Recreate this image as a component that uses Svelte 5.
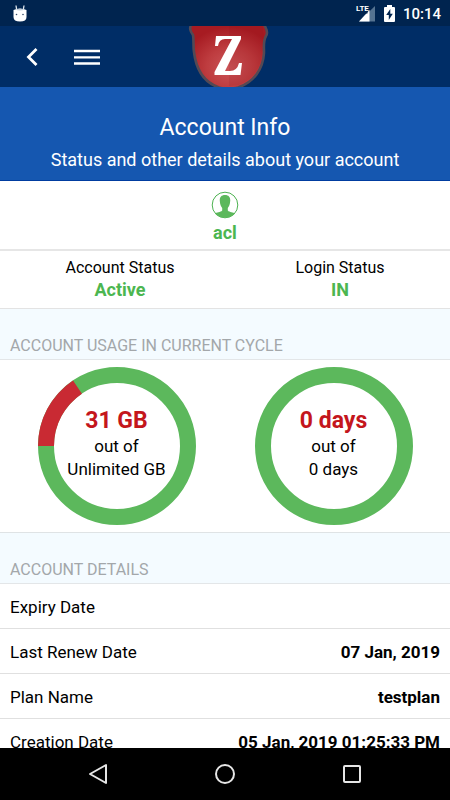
<script>
  const statuses = [
    { label: 'Account Status', value: 'Active' },
    { label: 'Login Status', value: 'IN' },
  ];

  const usage = [
    { used: '31 GB', total: 'Unlimited GB', share: 15.6 },
    { used: '0 days', total: '0 days', share: 0 },
  ];

  const details = [
    { label: 'Expiry Date', value: '' },
    { label: 'Last Renew Date', value: '07 Jan, 2019' },
    { label: 'Plan Name', value: 'testplan' },
    { label: 'Creation Date', value: '05 Jan, 2019 01:25:33 PM' },
  ];
</script>

<div class="screen">
  <div class="status-bar">
    <svg width="14" height="17" viewBox="0 0 14 17" aria-hidden="true">
      <path d="M3 .5 3.700 5M11 .5 10.300 5" stroke="#dfe6ee" stroke-width="1.300" />
      <path d="M.5 5Q7 2 13.500 5V12Q13.500 16.500 7 16.500T.5 12Z" fill="#fff" />
      <path d="M2 4.500Q7 2.800 12 4.500Q7 6.500 2 4.500Z" fill="#c2cedb" />
      <circle cx="3.500" cy="9.500" r=".8" fill="#354b69" />
      <circle cx="10" cy="9.500" r=".8" fill="#354b69" />
    </svg>
    <div class="indicators">
      <span class="signal">
        <svg width="20" height="17" viewBox="0 0 20 17" aria-hidden="true">
          <path d="M19 1V16.500H3Z" fill="#557391" />
          <path d="M13.500 5V16.500H3Z" fill="#fff" />
          <path d="M0 0H11.500V8.500H0Z" fill="#00244f" />
        </svg>
        <span class="lte">LTE</span>
      </span>
      <svg class="battery" width="11" height="17" viewBox="0 0 11 17" aria-hidden="true">
        <path d="M3 0H8V2H10Q11 2 11 3V16Q11 17 10 17H1Q0 17 0 16V3Q0 2 1 2H3Z" fill="#fff" />
        <path d="M6.300 4 2.200 10H4.800V15L8.800 8.700H6.300Z" fill="#00244f" />
      </svg>
      <span class="clock">10:14</span>
    </div>
  </div>

  <header>
    <div class="tools">
      <button aria-label="Back">
        <svg width="12" height="18" viewBox="0 0 12 18"><path d="M10.500 1 2.500 9l8 8" fill="none" stroke="#fff" stroke-width="2.800" /></svg>
      </button>
      <button aria-label="Menu">
        <svg width="26" height="16" viewBox="0 0 26 16"><path d="M0 2H26M0 8.300H26M0 14.500H26" stroke="#fff" stroke-width="2.300" /></svg>
      </button>
    </div>
    <svg class="logo" width="82" height="61" viewBox="0 0 82 61" role="img" aria-label="Z">
      <defs>
        <radialGradient id="shield" cx=".52" cy=".68" r=".62">
          <stop offset="0" stop-color="#cb5558" />
          <stop offset=".5" stop-color="#be3c3f" />
          <stop offset="1" stop-color="#a71b22" />
        </radialGradient>
      </defs>
      <path d="M4 -3C1 2 2 5 5 9C6 14 5 20 6 26C8 43 15 56 31 61.500Q40 64 50 61.500C66 56 75 43 76 27C76 20 75 15 78 10Q81 6 75 -3Z" fill="url(#shield)" stroke="#534a55" stroke-width="2.600" />
      <path d="M41 0H75V6L76 10Q74 15 74 27C73 42 65 54 50 59L41 60Z" fill="#8d101b" opacity=".12" />
      <path d="M28 10H53V13L37 45H42Q49 45 51 37H54L52.500 49H26.500V46L44 13H37Q31 13 30 20H27Z" fill="#fff" />
    </svg>
  </header>

  <main>
    <section class="banner">
      <h1>Account Info</h1>
      <p>Status and other details about your account</p>
    </section>

    <section class="user">
      <svg width="28" height="28" viewBox="0 0 28 28" aria-hidden="true">
        <circle cx="14" cy="14" r="12.800" fill="#fff" stroke="#4db251" />
        <path d="M14 4C10 4 8.500 6.500 8.800 10C9 14 10.500 16 11.200 17V19.500C9.500 21.500 5.500 21 4 22.500C9 28.300 19 28.300 24 22.500C22.500 21 18.500 21.500 16.800 19.500V17C17.500 16 19 14 19.200 10C19.500 6.500 18 4 14 4Z" fill="#5cb85c" />
      </svg>
      <strong>acl</strong>
    </section>

    <section class="statuses">
      {#each statuses as item}
        <div>
          <span>{item.label}</span>
          <strong>{item.value}</strong>
        </div>
      {/each}
    </section>

    <h2>Account usage in current cycle</h2>
    <section class="usage">
      {#each usage as item}
        <div class="ring">
          <svg viewBox="0 0 158 158" aria-hidden="true">
            <circle cx="79" cy="79" r="71" fill="none" stroke="#5cb85c" stroke-width="16" />
            {#if item.share > 0}
              <circle
                cx="79"
                cy="79"
                r="71"
                fill="none"
                stroke="#c92a33"
                stroke-width="16"
                pathLength="100"
                stroke-dasharray="{item.share} 100"
                transform="rotate(180 79 79)"
              />
            {/if}
          </svg>
          <div class="reading">
            <strong>{item.used}</strong>
            <span>out of</span>
            <span>{item.total}</span>
          </div>
        </div>
      {/each}
    </section>

    <h2>Account details</h2>
    <dl>
      {#each details as row}
        <div>
          <dt>{row.label}</dt>
          <dd>{row.value}</dd>
        </div>
      {/each}
    </dl>
  </main>

  <nav>
    <button aria-label="System back">
      <svg width="20" height="22" viewBox="0 0 20 22"><path d="M18 2V20L2 11Z" /></svg>
    </button>
    <button aria-label="Home">
      <svg width="22" height="22" viewBox="0 0 22 22"><circle cx="11" cy="11" r="9" /></svg>
    </button>
    <button aria-label="Recent apps">
      <svg width="20" height="20" viewBox="0 0 20 20"><rect x="2" y="2" width="16" height="16" rx="1" /></svg>
    </button>
  </nav>
</div>

<style>
  .screen {
    display: flex;
    flex-direction: column;
    height: 100vh;
    overflow: hidden;
    background: #fff;
    color: #000;
    font: 17px/24px Roboto, sans-serif;
  }

  .status-bar {
    flex: none;
    display: flex;
    align-items: center;
    justify-content: space-between;
    height: 26px;
    padding: 0 9px 0 13px;
    background: #00244f;
    color: #fff;
  }

  .indicators {
    display: flex;
    align-items: center;
  }

  .signal {
    position: relative;
    display: flex;
    margin-right: 8px;
  }

  .lte {
    position: absolute;
    top: 0;
    left: 0;
    font-size: 8px;
    font-weight: 700;
    line-height: 8px;
  }

  .battery {
    margin-right: 8px;
  }

  .clock {
    padding-top: 2px;
    font-size: 15px;
    font-weight: 500;
  }

  header {
    flex: none;
    display: grid;
    grid-template-columns: 1fr auto 1fr;
    padding-left: 8px;
    background: #002d66;
  }

  .tools {
    display: flex;
    align-items: center;
    gap: 36px;
    padding-left: 18px;
  }

  button {
    display: flex;
    padding: 0;
    border: 0;
    background: none;
  }

  main {
    flex: 1;
    min-height: 0;
    overflow-y: auto;
    scrollbar-width: none;
  }

  .banner {
    padding: 24px 10px 4px;
    border-bottom: 1px solid #003ca0;
    background: #1557b0;
    color: #fff;
    text-align: center;
  }

  h1 {
    margin: 0;
    font-size: 23px;
    font-weight: 400;
    line-height: 33px;
  }

  p {
    margin: 0;
    font-size: 18px;
    line-height: 32px;
  }

  .user {
    display: flex;
    flex-direction: column;
    align-items: center;
    padding: 10px 10px 2px;
    border-bottom: 2px solid #e6e6e6;
  }

  .user strong,
  .statuses strong {
    color: #4cb650;
    font-size: 18px;
  }

  .user strong {
    line-height: 28px;
  }

  .statuses {
    display: grid;
    grid-template-columns: 1fr 1fr;
    padding: 6px 0 7px 10px;
    border-bottom: 1px solid #e3e3e3;
    line-height: 22px;
    text-align: center;
  }

  .statuses div {
    display: flex;
    flex-direction: column;
  }

  .statuses span {
    font-size: 16px;
  }

  h2 {
    margin: 0;
    padding: 25px 10px 1px;
    border-bottom: 1px solid #e3e6e8;
    background: #f4fbff;
    color: #a3a7aa;
    font-size: 16px;
    font-weight: 400;
    line-height: 24px;
    text-transform: uppercase;
  }

  .usage {
    display: grid;
    grid-template-columns: 1fr 1fr;
    justify-items: center;
    padding: 7px 8px;
    border-bottom: 1px solid #dfe3e5;
  }

  .ring {
    display: grid;
    width: 158px;
  }

  .ring > * {
    grid-area: 1 / 1;
  }

  .reading {
    display: flex;
    flex-direction: column;
    align-items: center;
    justify-content: center;
    padding-bottom: 4px;
    line-height: 23px;
    z-index: 1;
  }

  .reading strong {
    color: #c4161c;
    font-size: 23px;
    line-height: 28px;
  }

  dl {
    margin: 0;
  }

  dl div {
    display: flex;
    justify-content: space-between;
    padding: 11px 10px 9px;
    border-bottom: 1px solid #e0e0e0;
  }

  dd {
    margin: 0;
    font-weight: 700;
  }

  nav {
    flex: none;
    display: flex;
    align-items: center;
    justify-content: center;
    gap: 106px;
    height: 52px;
    background: #000;
  }

  nav svg {
    fill: none;
    stroke: #e6e6e6;
    stroke-width: 2;
    stroke-linejoin: round;
  }
</style>
